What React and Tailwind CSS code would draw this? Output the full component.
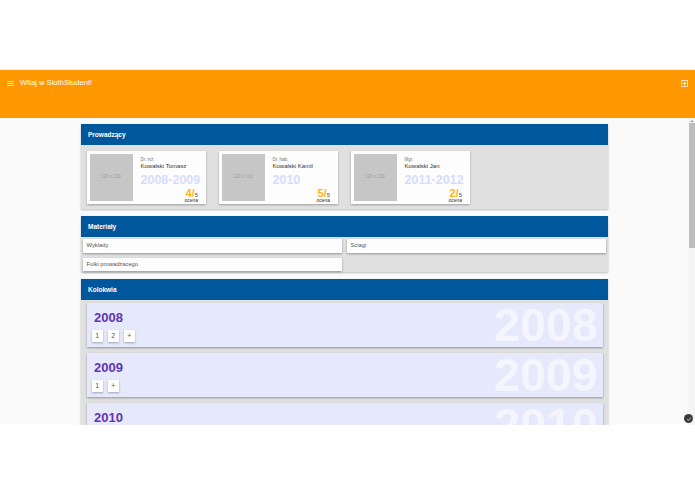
import React from 'react';
import { MdMenu, MdExitToApp, MdCheck } from 'react-icons/md';

const teachers = [
  { title: 'Dr. inż.', name: 'Kowalski Tomasz', years: '2008-2009', score: '4' },
  { title: 'Dr. hab.', name: 'Kowalski Kamil', years: '2010', score: '5' },
  { title: 'Mgr.', name: 'Kowalski Jan', years: '2011-2012', score: '2' },
];

const exams = [
  { year: '2008', buttons: ['1', '2', '+'] },
  { year: '2009', buttons: ['1', '+'] },
  { year: '2010', buttons: ['1', '+'] },
];

function Panel({ title, children, className }) {
  return (
    <section className="bg-[#e0e0e0] shadow-[0_1px_2px_rgba(0,0,0,0.25)]">
      <h2 className="h-[21px] bg-[#01579b] pl-[7px] text-[6.5px] leading-[21px] font-bold text-white">{title}</h2>
      <div className={className}>{children}</div>
    </section>
  );
}

function TeacherCard({ title, name, years, score }) {
  return (
    <div className="flex h-[53px] w-[119.5px] gap-[8px] bg-[#fdfdfd] p-[3px] shadow-[0_1px_2px_rgba(0,0,0,0.3)]">
      <div className="flex h-[47px] w-[43px] shrink-0 items-center justify-center bg-[#c6c6c6] text-[4.5px] text-[#a0a0a0]">
        120 x 130
      </div>
      <div className="min-w-0 flex-1 pt-[3px]">
        <p className="text-[4.5px] leading-[6px] text-[#777]">{title}</p>
        <p className="text-[6px] leading-[7px] text-[#333]">{name}</p>
        <p className="mt-[3px] text-[12.5px] leading-[15px] font-bold whitespace-nowrap text-[#d6dcfc]">{years}</p>
        <div className="mr-[5px] flex flex-col items-end">
          <p className="h-[10px] text-[6px] leading-[10px] text-[#555]">
            <span className="text-[11px] leading-[10px] font-bold text-[#fbb714]">{score}/</span>5
          </p>
          <p className="text-[5px] leading-[5px] text-[#333]">ocena</p>
        </div>
      </div>
    </div>
  );
}

function MaterialRow({ label }) {
  return (
    <div className="h-[13.5px] bg-[#fdfdfd] pl-[3.5px] text-[5.8px] leading-[13.5px] text-[#555] shadow-[0_1px_2px_rgba(0,0,0,0.35)]">
      {label}
    </div>
  );
}

function ExamCard({ year, buttons }) {
  return (
    <div className="relative h-[44.5px] shrink-0 overflow-hidden bg-[#e6e8fc] shadow-[0_1px_2px_rgba(0,0,0,0.35)]">
      <span className="absolute top-[-3px] right-[5px] text-[46.5px] leading-[50px] font-bold text-white/60">{year}</span>
      <p className="pt-[7.5px] pl-[7.5px] text-[13px] leading-[15px] font-bold text-[#5e35b1]">{year}</p>
      <div className="mt-[5px] flex gap-[4.5px] pl-[5px]">
        {buttons.map((b, i) => (
          <span
            key={i}
            className="flex h-[12px] w-[11.5px] items-center justify-center bg-white text-[7px] text-[#555] shadow-[0_1px_2px_rgba(0,0,0,0.3)]"
          >
            {b}
          </span>
        ))}
      </div>
    </div>
  );
}

export default function App() {
  return (
    <div className="relative h-[494px] w-[695px] overflow-hidden bg-white font-['Liberation_Sans',Arial,sans-serif]">
      <div className="h-[70px]" />
      <header className="flex h-[48px] items-start justify-between bg-[#ff9800] px-[6px] pt-[8px] text-white shadow-[0_1px_3px_rgba(0,0,0,0.2)]">
        <div className="flex items-center gap-[5px]">
          <MdMenu className="h-[9px] w-[9px]" />
          <span className="text-[7.6px] leading-[10px]">Witaj w SlothStudent!</span>
        </div>
        <MdExitToApp className="mt-[0.5px] h-[9px] w-[9px]" />
      </header>

      <main className="flex h-[307px] overflow-hidden bg-[#fafafa]">
        <div className="flex flex-1 justify-center overflow-hidden pt-[6px]">
          <div className="flex w-[527px] shrink-0 flex-col gap-[7px]">
            <Panel title="Prowadzący" className="flex h-[64px] gap-[12.5px] pt-[6px] pl-[5.5px]">
              {teachers.map((t) => (
                <TeacherCard key={t.name} {...t} />
              ))}
            </Panel>

            <Panel title="Materiały" className="grid h-[35px] grid-cols-2 gap-x-[5px] gap-y-[4px] px-[2px] pt-[2px]">
              <MaterialRow label="Wyklady" />
              <MaterialRow label="Sciagi" />
              <MaterialRow label="Folki prowadzacego" />
            </Panel>

            <Panel title="Kolokwia" className="flex h-[200px] flex-col gap-[5.5px] px-[5.5px] pt-[2.5px]">
              {exams.map((e) => (
                <ExamCard key={e.year} {...e} />
              ))}
            </Panel>
          </div>
        </div>
        {/* scrollbar */}
        <div className="w-[6px] shrink-0 bg-[#f4f4f4] pt-[2px]">
          <div className="mx-auto mb-[1px] h-0 w-0 border-x-[2px] border-b-[2px] border-x-transparent border-b-[#a0a0a0]" />
          <div className="h-[125px] bg-[#bdbdbd]" />
        </div>
      </main>

      <span className="absolute top-[414px] left-[684px] flex h-[9px] w-[9px] items-center justify-center rounded-full bg-[#3c3c3c] text-white">
        <MdCheck className="h-[6px] w-[6px]" />
      </span>
    </div>
  );
}
